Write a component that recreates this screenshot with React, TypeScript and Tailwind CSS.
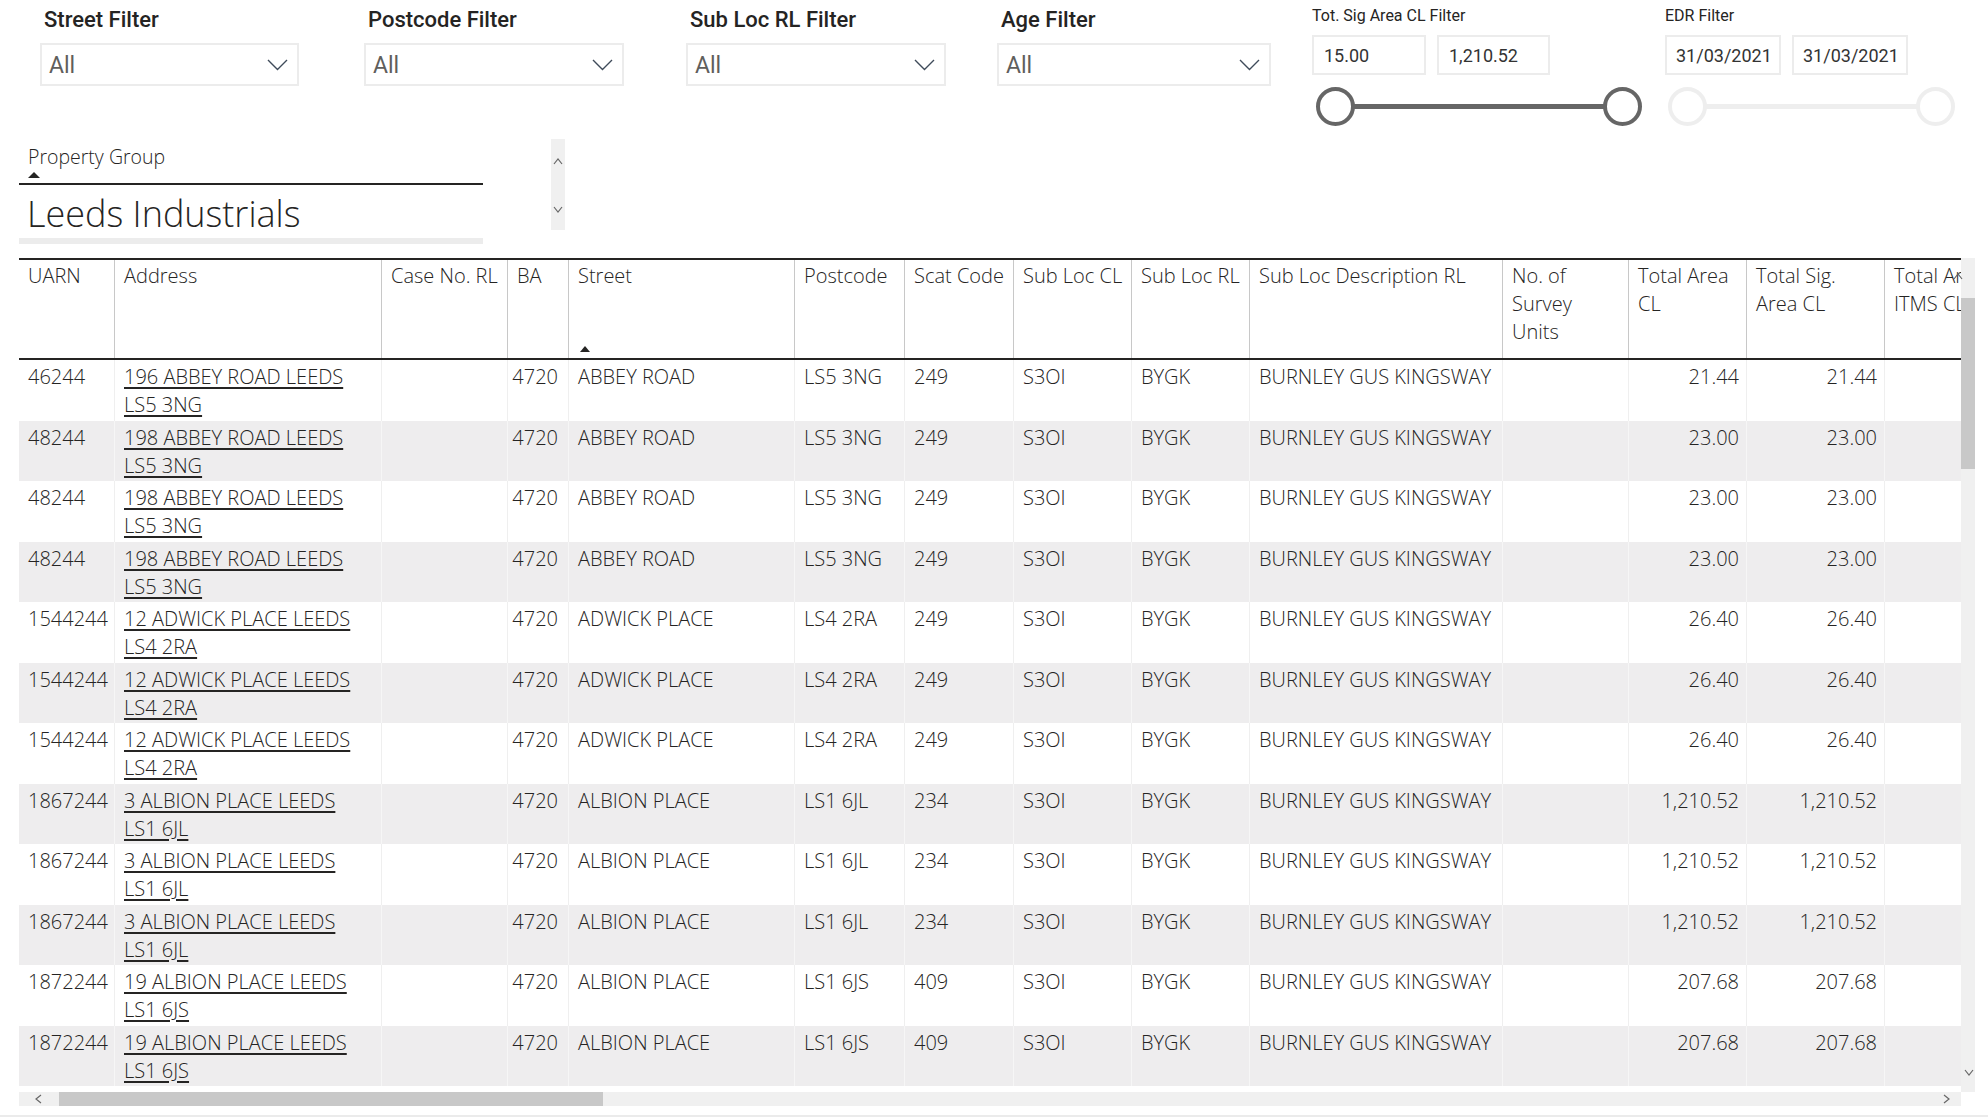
import React from 'react';

// columns of the table, widths taken from the report
const cols = [
  { key: 'uarn', w: 'w-[96px]', head: ['UARN'], right: false },
  { key: 'address', w: 'w-[267px]', head: ['Address'], right: false },
  { key: 'caseNo', w: 'w-[126px]', head: ['Case No. RL'], right: false },
  { key: 'ba', w: 'w-[61px]', head: ['BA'], right: true },
  { key: 'street', w: 'w-[226px]', head: ['Street'], right: false },
  { key: 'postcode', w: 'w-[110px]', head: ['Postcode'], right: false },
  { key: 'scat', w: 'w-[109px]', head: ['Scat Code'], right: false },
  { key: 'subCl', w: 'w-[118px]', head: ['Sub Loc CL'], right: false },
  { key: 'subRl', w: 'w-[118px]', head: ['Sub Loc RL'], right: false },
  { key: 'desc', w: 'w-[253px]', head: ['Sub Loc Description RL'], right: false },
  { key: 'units', w: 'w-[126px]', head: ['No. of', 'Survey', 'Units'], right: false },
  { key: 'area', w: 'w-[118px]', head: ['Total Area', 'CL'], right: true },
  { key: 'sig', w: 'w-[138px]', head: ['Total Sig.', 'Area CL'], right: true },
  { key: 'itms', w: 'w-[140px]', head: ['Total Area', 'ITMS CL'], right: true },
];

type Row = {
  uarn: string;
  addr1: string;
  addr2: string;
  street: string;
  postcode: string;
  scat: string;
  area: string;
};

const base: Row[] = [
  { uarn: '46244', addr1: '196 ABBEY ROAD LEEDS', addr2: 'LS5 3NG', street: 'ABBEY ROAD', postcode: 'LS5 3NG', scat: '249', area: '21.44' },
  { uarn: '48244', addr1: '198 ABBEY ROAD LEEDS', addr2: 'LS5 3NG', street: 'ABBEY ROAD', postcode: 'LS5 3NG', scat: '249', area: '23.00' },
  { uarn: '48244', addr1: '198 ABBEY ROAD LEEDS', addr2: 'LS5 3NG', street: 'ABBEY ROAD', postcode: 'LS5 3NG', scat: '249', area: '23.00' },
  { uarn: '48244', addr1: '198 ABBEY ROAD LEEDS', addr2: 'LS5 3NG', street: 'ABBEY ROAD', postcode: 'LS5 3NG', scat: '249', area: '23.00' },
  { uarn: '1544244', addr1: '12 ADWICK PLACE LEEDS', addr2: 'LS4 2RA', street: 'ADWICK PLACE', postcode: 'LS4 2RA', scat: '249', area: '26.40' },
  { uarn: '1544244', addr1: '12 ADWICK PLACE LEEDS', addr2: 'LS4 2RA', street: 'ADWICK PLACE', postcode: 'LS4 2RA', scat: '249', area: '26.40' },
  { uarn: '1544244', addr1: '12 ADWICK PLACE LEEDS', addr2: 'LS4 2RA', street: 'ADWICK PLACE', postcode: 'LS4 2RA', scat: '249', area: '26.40' },
  { uarn: '1867244', addr1: '3 ALBION PLACE LEEDS', addr2: 'LS1 6JL', street: 'ALBION PLACE', postcode: 'LS1 6JL', scat: '234', area: '1,210.52' },
  { uarn: '1867244', addr1: '3 ALBION PLACE LEEDS', addr2: 'LS1 6JL', street: 'ALBION PLACE', postcode: 'LS1 6JL', scat: '234', area: '1,210.52' },
  { uarn: '1867244', addr1: '3 ALBION PLACE LEEDS', addr2: 'LS1 6JL', street: 'ALBION PLACE', postcode: 'LS1 6JL', scat: '234', area: '1,210.52' },
  { uarn: '1872244', addr1: '19 ALBION PLACE LEEDS', addr2: 'LS1 6JS', street: 'ALBION PLACE', postcode: 'LS1 6JS', scat: '409', area: '207.68' },
  { uarn: '1872244', addr1: '19 ALBION PLACE LEEDS', addr2: 'LS1 6JS', street: 'ALBION PLACE', postcode: 'LS1 6JS', scat: '409', area: '207.68' },
];

function Chevron() {
  return (
    <svg width="21" height="12" viewBox="0 0 21 12" fill="none">
      <polyline points="1,1 10.5,10.5 20,1" stroke="#3f4b5a" strokeWidth="1.4" />
    </svg>
  );
}

function Dropdown({ label, w }: { label: string; w: string }) {
  return (
    <div className={`${w} flex flex-col`}>
      <div className="h-[40px] pl-[4px] leading-[40px] text-[22px] font-medium text-[#252423] font-[family-name:Roboto,sans-serif] whitespace-nowrap">
        {label}
      </div>
      <div className="mt-[3px] h-[43px] border-2 border-[#ececec] flex items-center justify-between pl-[7px] pr-[9px]">
        <span className="pt-[3px] text-[23px] text-[#605e5c] font-[family-name:Roboto,sans-serif]">All</span>
        <Chevron />
      </div>
    </div>
  );
}

function Slider({ w, dark }: { w: string; dark: boolean }) {
  const ring = dark ? 'border-[#666666]' : 'border-[#eeeeee]';
  return (
    <div className={`relative h-[39px] ${w}`}>
      <div className={`absolute left-[19px] right-[19px] top-[17px] h-[5px] ${dark ? 'bg-[#666666]' : 'bg-[#eeeeee]'}`} />
      <div className={`absolute left-0 top-0 w-[39px] h-[39px] rounded-full border-4 bg-white ${ring}`} />
      <div className={`absolute right-0 top-0 w-[39px] h-[39px] rounded-full border-4 bg-white ${ring}`} />
    </div>
  );
}

function SmallArrow({ dir }: { dir: 'left' | 'right' | 'up' | 'down' }) {
  const pts =
    dir === 'left' ? '6,1 1,5 6,9' : dir === 'right' ? '1,1 6,5 1,9' : dir === 'up' ? '1,6 5,1 9,6' : '1,1 5,6 9,1';
  const w = dir === 'left' || dir === 'right' ? 7 : 10;
  const h = dir === 'left' || dir === 'right' ? 10 : 7;
  return (
    <svg width={w} height={h} viewBox={`0 0 ${w} ${h}`} fill="none">
      <polyline points={pts} stroke="#666666" strokeWidth="1.2" />
    </svg>
  );
}

export default function App() {
  return (
    <div className="w-[1988px] h-[1118px] bg-white overflow-hidden flex flex-col text-[#252423] font-[family-name:'Open_Sans',sans-serif]">
      {/* Filters */}
      <div className="h-[139px] flex items-start pl-[40px]">
        <Dropdown label="Street Filter" w="w-[259px]" />
        <div className="ml-[65px]">
          <Dropdown label="Postcode Filter" w="w-[260px]" />
        </div>
        <div className="ml-[62px]">
          <Dropdown label="Sub Loc RL Filter" w="w-[260px]" />
        </div>
        <div className="ml-[51px]">
          <Dropdown label="Age Filter" w="w-[274px]" />
        </div>

        <div className="ml-[41px] w-[338px] flex flex-col font-[family-name:Roboto,sans-serif]">
          <div className="h-[32px] leading-[32px] text-[16px] text-[#252423]">Tot. Sig Area CL Filter</div>
          <div className="mt-[3px] flex">
            <div className="w-[114px] h-[40px] border-2 border-[#ececec] flex items-center pl-[10px] text-[18px] text-[#333333]">15.00</div>
            <div className="ml-[11px] w-[113px] h-[40px] border-2 border-[#ececec] flex items-center pl-[10px] text-[18px] text-[#333333]">1,210.52</div>
          </div>
          <div className="mt-[12px] ml-[4px]">
            <Slider w="w-[326px]" dark />
          </div>
        </div>

        <div className="ml-[15px] w-[300px] flex flex-col font-[family-name:Roboto,sans-serif]">
          <div className="h-[32px] leading-[32px] text-[16px] text-[#252423]">EDR Filter</div>
          <div className="mt-[3px] flex">
            <div className="w-[116px] h-[40px] border-2 border-[#ececec] flex items-center pl-[9px] text-[18px] text-[#333333]">31/03/2021</div>
            <div className="ml-[11px] w-[116px] h-[40px] border-2 border-[#ececec] flex items-center pl-[9px] text-[18px] text-[#333333]">31/03/2021</div>
          </div>
          <div className="mt-[12px] ml-[3px]">
            <Slider w="w-[287px]" dark={false} />
          </div>
        </div>
      </div>

      {/* Property group slicer */}
      <div className="h-[119px] flex items-start pl-[19px]">
        <div className="w-[464px] flex flex-col pt-[6px]">
          <div className="pl-[9px] text-[19.5px] leading-[24px] font-light">Property Group</div>
          <div className="ml-[9px] mt-[3px] w-0 h-0 border-l-[6px] border-r-[6px] border-b-[6px] border-l-transparent border-r-transparent border-b-[#252423]" />
          <div className="mt-[5px] h-[2px] bg-[#252423]" />
          <div className="pl-[8px] h-[52px] leading-[58px] text-[36px] font-light whitespace-nowrap">Leeds Industrials</div>
          <div className="mt-[1px] h-[6px] bg-[#ececec]" />
        </div>
        <div className="ml-[68px] w-[14px] h-[91px] bg-[#f0f0f0] flex flex-col items-center pt-[19px]">
          <SmallArrow dir="up" />
          <div className="mt-[41px]">
            <SmallArrow dir="down" />
          </div>
        </div>
      </div>

      {/* Table */}
      <div className="h-[834px] flex">
        <div className="ml-[19px] w-[1942px] overflow-hidden flex flex-col text-[20px] leading-[28px] font-light">
          <div className="h-[102px] border-t-2 border-b-2 border-[#252423] flex shrink-0">
            {cols.map((c) => (
              <div
                key={c.key}
                className={`${c.w} shrink-0 h-full border-r border-[#c8c8c8] pl-[9px] pt-[2px] flex flex-col whitespace-nowrap text-[#252423]`}
              >
                {c.head.map((h) => (
                  <div key={h}>{h}</div>
                ))}
                {c.key === 'street' && (
                  <div className="mt-auto mb-[6px] ml-[2px] w-0 h-0 border-l-[5px] border-r-[5px] border-b-[6px] border-l-transparent border-r-transparent border-b-[#252423]" />
                )}
              </div>
            ))}
          </div>
          {base.map((r, i) => (
            <div key={i} className={`h-[60.5px] flex shrink-0 ${i % 2 === 1 ? 'bg-[#eeedee]' : 'bg-white'}`}>
              {cols.map((c) => {
                let content: React.ReactNode = '';
                if (c.key === 'uarn') content = r.uarn;
                if (c.key === 'address')
                  content = (
                    <span className="underline underline-offset-[3px]">
                      <span className="block">{r.addr1}</span>
                      <span className="block">{r.addr2}</span>
                    </span>
                  );
                if (c.key === 'ba') content = '4720';
                if (c.key === 'street') content = r.street;
                if (c.key === 'postcode') content = r.postcode;
                if (c.key === 'scat') content = r.scat;
                if (c.key === 'subCl') content = 'S3OI';
                if (c.key === 'subRl') content = 'BYGK';
                if (c.key === 'desc') content = 'BURNLEY GUS KINGSWAY';
                if (c.key === 'area' || c.key === 'sig') content = r.area;
                return (
                  <div
                    key={c.key}
                    className={`${c.w} shrink-0 h-full border-r ${i % 2 === 1 ? 'border-[#f6f6f6]' : 'border-[#efefef]'} pt-[3px] whitespace-nowrap ${
                      c.right ? (c.key === 'ba' ? 'text-right pr-[10px]' : 'text-right pr-[7px]') : 'pl-[9px]'
                    }`}
                  >
                    {content}
                  </div>
                );
              })}
            </div>
          ))}
        </div>
        {/* vertical scrollbar */}
        <div className="relative w-[14px] h-full bg-[#f0f0f0]">
          <div className="absolute -left-[8px] top-[15px]">
            <SmallArrow dir="up" />
          </div>
          <div className="absolute left-0 right-0 top-[40px] h-[171px] bg-[#c8c8c8]" />
          <div className="absolute left-[3px] bottom-[16px]">
            <SmallArrow dir="down" />
          </div>
        </div>
      </div>

      {/* horizontal scrollbar */}
      <div className="ml-[19px] w-[1942px] h-[14px] bg-[#f0f0f0] flex items-center">
        <div className="ml-[16px]">
          <SmallArrow dir="left" />
        </div>
        <div className="ml-[17px] w-[544px] h-full bg-[#c8c8c8]" />
        <div className="ml-auto mr-[11px]">
          <SmallArrow dir="right" />
        </div>
      </div>

      <div className="mt-[9px] h-[2px] bg-[#ebebeb]" />
    </div>
  );
}
